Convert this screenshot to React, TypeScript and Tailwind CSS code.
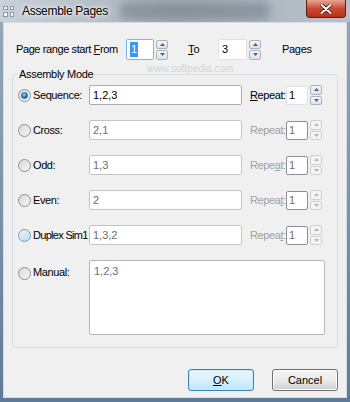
import React from "react";

const font = { fontFamily: '"Liberation Sans", Arial, sans-serif' };

function Radio({ checked, blue }: { checked?: boolean; blue?: boolean }) {
  const id = "rg" + (checked ? "c" : blue ? "b" : "n");
  return (
    <svg width="13" height="13" viewBox="0 0 13 13" className="shrink-0">
      <defs>
        <linearGradient id={id} x1="0" y1="0" x2="1" y2="1">
          <stop offset="0" stopColor={blue ? "#e6f2fb" : "#d7d7d7"} />
          <stop offset="1" stopColor={blue ? "#c5dcec" : "#f7f7f7"} />
        </linearGradient>
        <radialGradient id="dot" cx="0.45" cy="0.4" r="0.6">
          <stop offset="0" stopColor="#a9e1fa" />
          <stop offset="0.5" stopColor="#1e86c9" />
          <stop offset="1" stopColor="#0e4a7c" />
        </radialGradient>
      </defs>
      <circle cx="6.5" cy="6.5" r="6" fill={`url(#${id})`} stroke={blue ? "#6f9fc2" : "#8f8f8f"} strokeWidth="1" />
      {checked && <circle cx="6.5" cy="6.5" r="3.3" fill="url(#dot)" />}
    </svg>
  );
}

function Spin({ disabled }: { disabled?: boolean }) {
  const arrow = disabled ? "#b5b5b5" : "#4d6185";
  const cls = disabled
    ? "border-[#d0d0d0] bg-[#f4f4f4]"
    : "border-[#a9b3bf] bg-gradient-to-b from-[#f3f6f9] to-[#dde3ea]";
  return (
    <div className="flex flex-col w-[12px] h-[20px] gap-[1px]">
      <div className={`flex-1 flex items-center justify-center border rounded-[2px] ${cls}`}>
        <svg width="5" height="3" viewBox="0 0 5 3"><path d="M0 3 L2.5 0 L5 3 Z" fill={arrow} /></svg>
      </div>
      <div className={`flex-1 flex items-center justify-center border rounded-[2px] ${cls}`}>
        <svg width="5" height="3" viewBox="0 0 5 3"><path d="M0 0 L2.5 3 L5 0 Z" fill={arrow} /></svg>
      </div>
    </div>
  );
}

function Row({
  label,
  value,
  checked,
  blue,
  enabled,
  tight,
  repeatLabel,
}: {
  label: string;
  value: string;
  checked?: boolean;
  blue?: boolean;
  enabled?: boolean;
  tight?: boolean;
  repeatLabel: React.ReactNode;
}) {
  return (
    <div className="flex items-center h-[20px]">
      <div className="w-[14px] ml-[5px] flex">
        <Radio checked={checked} blue={blue} />
      </div>
      <span
        className={`ml-[1px] w-[56px] text-[11px] text-black whitespace-nowrap ${
          tight ? "tracking-[-0.7px]" : "tracking-[-0.4px]"
        }`}
      >
        {label}
      </span>
      <div
        className={`w-[153px] h-[20px] bg-white border rounded-[2px] flex items-center pl-[3px] text-[11px] ${
          enabled ? "border-[#abadb3] text-black" : "border-[#c3c6c9] text-[#6d6d6d]"
        }`}
      >
        {value}
      </div>
      <span
        className={`ml-[8px] w-[36px] text-[11px] tracking-[-0.4px] whitespace-nowrap ${
          enabled ? "text-black" : "text-[#a0a0a0]"
        }`}
      >
        {repeatLabel}
      </span>
      <div
        className={`w-[22px] h-[19px] bg-white border rounded-[2px] flex items-center pl-[2px] text-[11px] ${
          enabled ? "border-[#dde2e8] text-black" : "border-[#8e9194] text-[#6d6d6d]"
        }`}
      >
        1
      </div>
      <div className="ml-[2px]">
        <Spin disabled={!enabled} />
      </div>
    </div>
  );
}

export default function App() {
  return (
    <div
      style={font}
      className="w-[350px] h-[402px] flex flex-col overflow-hidden bg-gradient-to-b from-[#9aa8b6] via-[#7d93aa] to-[#5f7a98]"
    >
      {/* Title bar */}
      <div className="relative h-[22px] shrink-0 flex items-center bg-gradient-to-r from-[#c9d1da] via-[#a7b0b8] to-[#b8c2cc] overflow-hidden">
        <div className="absolute left-[120px] top-[2px] w-[150px] h-[18px] rounded-[6px] bg-[#59636e] opacity-40 blur-[4px]" />
        <div className="relative ml-[3px] grid grid-cols-2 gap-[2px] w-[11px] h-[11px]">
          <div className="bg-[#f4f6f8] border border-[#8b9aa8]" />
          <div className="bg-[#f4f6f8] border border-[#8b9aa8]" />
          <div className="bg-[#f4f6f8] border border-[#8b9aa8]" />
          <div className="bg-[#f4f6f8] border border-[#8b9aa8]" />
        </div>
        <span className="relative ml-[8px] text-[12px] tracking-[-0.3px] text-black [text-shadow:0_0_6px_#ffffff,0_0_3px_#ffffff]">
          Assemble Pages
        </span>
        <div className="flex-1" />
        <div className="relative mr-[4px] self-start w-[40px] h-[18px] rounded-b-[4px] border border-t-0 border-[#5a2016] bg-gradient-to-b from-[#e8a493] via-[#c94a32] to-[#b8301a] flex items-center justify-center">
          <svg width="12" height="10" viewBox="0 0 12 10">
            <path d="M1.5 1 L10.5 9 M10.5 1 L1.5 9" stroke="#3a0c05" strokeWidth="3.4" strokeLinecap="round" />
            <path d="M1.5 1 L10.5 9 M10.5 1 L1.5 9" stroke="#ffffff" strokeWidth="2" strokeLinecap="round" />
          </svg>
        </div>
      </div>

      {/* Client */}
      <div className="relative mx-[3px] mb-[4px] flex-1 bg-[#f0f0f0] border border-[#d8dde3] flex flex-col text-black">
        <span className="absolute left-[143px] top-[38px] text-[10px] text-[#d4d4d4] pointer-events-none">
          www.softpedia.com
        </span>

        {/* Page range row */}
        <div className="relative flex items-center h-[21px] mt-[16px] text-[11px]">
          <span className="ml-[12px] w-[110px] whitespace-nowrap tracking-[-0.4px]">
            Page range start <span className="underline">F</span>rom
          </span>
          <div className="w-[28px] h-[21px] bg-white border border-[#7eb4ea] rounded-[2px] flex items-center pl-[3px]">
            <span className="bg-[#3399ff] text-white leading-[15px] px-[1px]">1</span>
          </div>
          <div className="ml-[2px]">
            <Spin />
          </div>
          <span className="ml-[20px] w-[30px]">
            <span className="underline">T</span>o
          </span>
          <div className="w-[29px] h-[21px] bg-white border border-[#dde2e8] rounded-[2px] flex items-center pl-[3px]">3</div>
          <div className="ml-[2px]">
            <Spin />
          </div>
          <span className="ml-[21px] tracking-[-0.3px]">Pages</span>
        </div>

        {/* Group box */}
        <fieldset className="relative mx-[8px] mt-[6px] h-[282px] border border-[#d5dfe5] rounded-[3px] px-0 pb-0">
          <legend className="ml-[5px] px-[1px] text-[11px] tracking-[-0.3px] leading-[16px]">Assembly Mode</legend>
          <div className="flex flex-col mt-[3px] gap-[15px]">
            <Row
              label="Sequence:"
              value="1,2,3"
              checked
              enabled
              repeatLabel={
                <>
                  <span className="underline">R</span>epeat:
                </>
              }
            />
            <Row label="Cross:" value="2,1" repeatLabel="Repeat:" />
            <Row
              label="Odd:"
              value="1,3"
              repeatLabel={
                <>
                  Repe<span className="underline">a</span>t:
                </>
              }
            />
            <Row
              label="Even:"
              value="2"
              repeatLabel={
                <>
                  Repea<span className="underline">t</span>:
                </>
              }
            />
            <Row
              label="Duplex Sim1"
              value="1,3,2"
              blue
              tight
              repeatLabel={
                <>
                  Repea<span className="underline">t</span>:
                </>
              }
            />
            <div className="flex items-start">
              <div className="w-[14px] ml-[5px] mt-[7px] flex">
                <Radio />
              </div>
              <span className="ml-[1px] mt-[4px] w-[56px] text-[11px] tracking-[-0.4px]">Manual:</span>
              <div className="w-[236px] h-[75px] bg-white border border-[#b4b8bd] rounded-[2px] pl-[4px] pt-[2px] text-[11px] text-[#6d6d6d]">
                1,2,3
              </div>
            </div>
          </div>
        </fieldset>

        <div className="flex-1" />

        {/* Buttons */}
        <div className="flex justify-end gap-[18px] mr-[8px] mb-[6px]">
          <button className="w-[66px] h-[22px] rounded-[3px] border border-[#3c7fb1] bg-gradient-to-b from-[#eaf6fd] via-[#d9f0fc] to-[#bee6fd] shadow-[inset_0_0_0_1px_#c5eafc] text-[11px]">
            <span className="underline">O</span>K
          </button>
          <button className="w-[66px] h-[22px] rounded-[3px] border border-[#707070] bg-gradient-to-b from-[#f2f2f2] via-[#ebebeb] to-[#cfcfcf] shadow-[inset_0_0_0_1px_#fcfcfc] text-[11px]">
            Cancel
          </button>
        </div>
      </div>
    </div>
  );
}
